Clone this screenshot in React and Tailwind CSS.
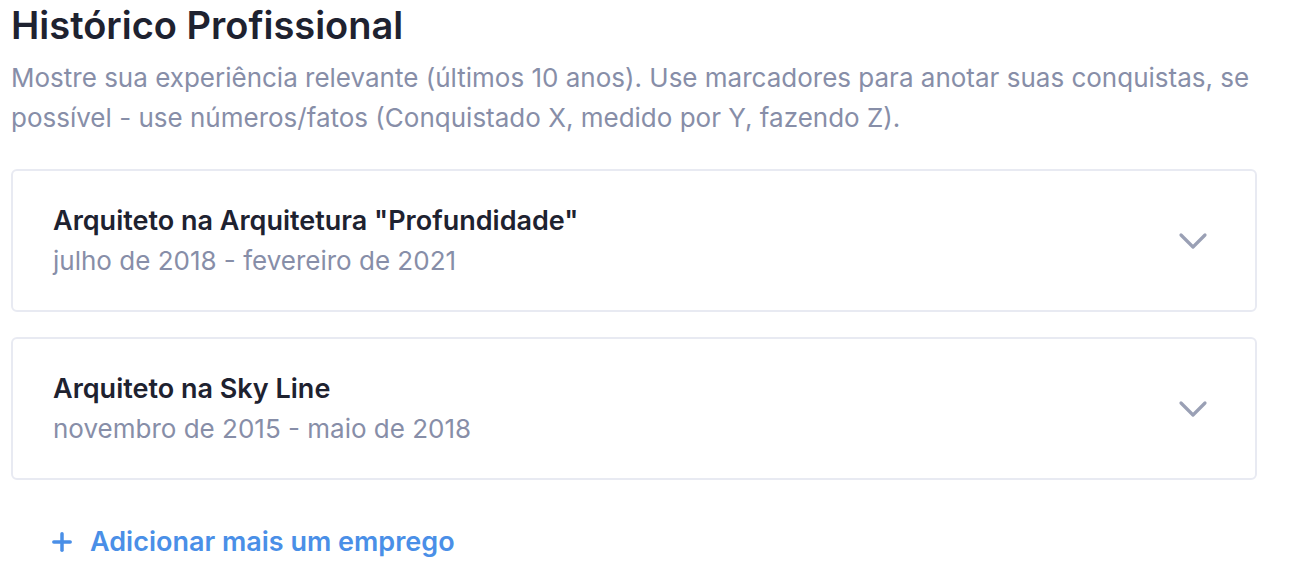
import { ChevronDown, Plus } from 'lucide-react'

const jobs = [
  { title: 'Arquiteto na Arquitetura "Profundidade"', period: 'julho de 2018 - fevereiro de 2021' },
  { title: 'Arquiteto na Sky Line', period: 'novembro de 2015 - maio de 2018' },
]

function JobCard({ job }) {
  return (
    <div className="flex items-center justify-between rounded-md border-2 border-[#e8eaf2] bg-white pl-10 pr-[38px] h-[143px]">
      <div className="flex flex-col">
        <span className="text-[27px] font-semibold leading-[40px] text-[#1e2230]">{job.title}</span>
        <span className="text-[26px] leading-[40px] text-[#878ea8]">{job.period}</span>
      </div>
      <ChevronDown className="w-12 h-12 text-[#9aa0b5]" strokeWidth={1.6} />
    </div>
  )
}

export default function App() {
  return (
    <div className="min-h-screen bg-white px-[11px] pt-0 font-['Inter',sans-serif]">
      <h1 className="text-[38px] font-semibold leading-[50px] text-[#1e2230]">Histórico Profissional</h1>
      <p className="mt-[8px] text-[26px] leading-[40px] text-[#878ea8] pr-8">
        Mostre sua experiência relevante (últimos 10 anos). Use marcadores para anotar suas conquistas, se possível - use números/fatos (Conquistado X, medido por Y, fazendo Z).
      </p>

      <div className="mt-[31px] flex flex-col gap-[25px] w-[1246px]">
        {jobs.map((job) => (
          <JobCard key={job.title} job={job} />
        ))}
      </div>

      <button className="mt-[42px] flex items-center gap-[14px] pl-[37px] text-[27px] font-semibold text-[#4a8fe7]">
        <Plus className="w-7 h-7" strokeWidth={3} />
        Adicionar mais um emprego
      </button>
    </div>
  )
}
